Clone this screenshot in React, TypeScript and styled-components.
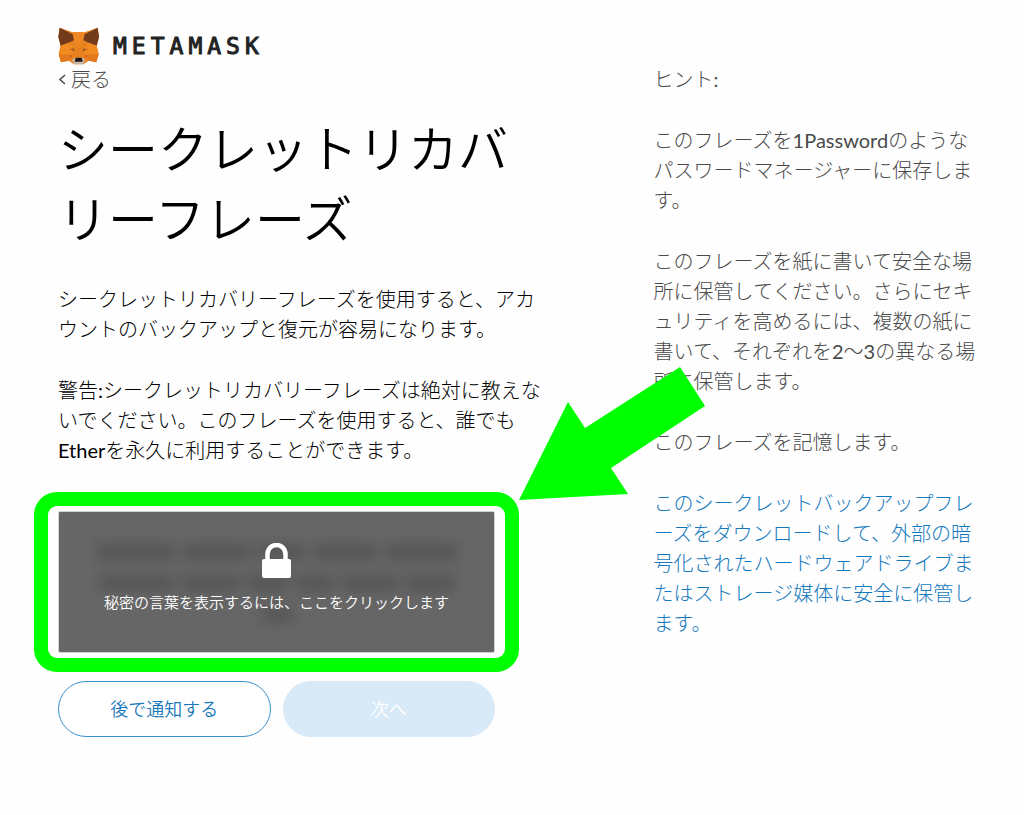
import React from "react";
import styled, { createGlobalStyle } from "styled-components";

const GlobalStyle = createGlobalStyle`
  * { box-sizing: border-box; }
  body {
    margin: 0;
    background: #fefefe;
    color: #000;
    font-family: Lato, "Noto Sans CJK JP Light", "Noto Sans CJK JP", sans-serif;
    font-size: 20px;
    line-height: 30px;
    font-weight: 400;
    line-break: loose;
  }
`;

const Page = styled.div`
  padding: 28px 44px 78px 58px;
`;

const Header = styled.header`
  display: flex;
  align-items: center;
  gap: 13px;
  height: 36px;
`;

const FoxLogo = styled.svg`
  width: 42px;
  height: 38px;
`;

const Wordmark = styled.span`
  font-family: "DejaVu Sans Mono", monospace;
  font-size: 23px;
  letter-spacing: 5px;
  color: #222;
  -webkit-text-stroke: 1px #222;
`;

const Columns = styled.div`
  display: grid;
  grid-template-columns: 3fr 2fr;
  gap: 106px;
`;

const Main = styled.main`
  min-width: 0;
`;

const BackLink = styled.a`
  display: flex;
  align-items: center;
  gap: 4px;
  width: fit-content;
  height: 30px;
  color: #4a4a4a;
  text-decoration: none;
`;

const Chevron = styled.svg`
  width: 9px;
  height: 12px;
`;

const Title = styled.h1`
  margin: 20px 0 30px;
  color: #000;
  font-family: Lato, "Noto Sans CJK JP DemiLight", "Noto Sans CJK JP", sans-serif;
  font-size: 50px;
  line-height: 70px;
  font-weight: 350;
`;

const Paragraph = styled.p`
  margin: 0 0 31px;
`;

const SecretArea = styled.div`
  position: relative;
  max-width: 437px;
  margin-top: 46px;
`;

const SecretBox = styled.div`
  display: grid;
  height: 142px;
  overflow: hidden;
  border: 1px solid #d2d2d2;
  border-radius: 2px;
  background: #fff;

  > * { grid-area: 1 / 1; }
`;

const HiddenWords = styled.div`
  display: flex;
  flex-direction: column;
  align-items: center;
  padding-top: 32px;
  gap: 15px;
  filter: blur(7px);
`;

const WordLine = styled.div`
  display: flex;
  gap: 8px;
`;

const Word = styled.span<{ $width: number }>`
  width: ${(p) => p.$width}px;
  height: 16px;
  background: #d4d4d4;
`;

const RevealButton = styled.button`
  position: relative;
  display: flex;
  flex-direction: column;
  align-items: center;
  gap: 9px;
  padding: 31px 0 0;
  border: 0;
  background: rgba(0, 0, 0, 0.6);
  color: #fff;
  font: inherit;
  font-family: "Noto Sans CJK JP DemiLight", "Noto Sans CJK JP", sans-serif;
  font-size: 15px;
  font-weight: 350;
  cursor: pointer;
`;

const LockIcon = styled.svg`
  width: 29px;
  height: 35px;
`;

const Highlight = styled.div`
  position: absolute;
  inset: -19px -24px;
  border: 14px solid #00ff00;
  border-radius: 23px;
  pointer-events: none;
`;

const Arrow = styled.svg`
  position: absolute;
  z-index: 1;
  left: 461px;
  bottom: 153px;
  width: 186px;
  height: 133px;
  pointer-events: none;
`;

const Actions = styled.div`
  display: flex;
  gap: 12px;
  max-width: 437px;
  margin-top: 28px;
`;

const PillButton = styled.button<{ $primary?: boolean }>`
  flex: 1;
  height: 56px;
  padding: 0 0 2px;
  border: 1px solid ${(p) => (p.$primary ? "#d8e9f8" : "#3a91cc")};
  border-radius: 28px;
  background: ${(p) => (p.$primary ? "#d8e9f8" : "#fff")};
  color: ${(p) => (p.$primary ? "#fff" : "#1878bb")};
  font: inherit;
  font-family: "Noto Sans CJK JP DemiLight", "Noto Sans CJK JP", sans-serif;
  font-size: 18px;
  font-weight: 350;
`;

const Tips = styled.aside`
  min-width: 0;
  color: #4a4a4a;
`;

const DownloadLink = styled.a`
  color: #1478bd;
  text-decoration: none;
`;

function Fox() {
  return (
    <FoxLogo viewBox="0 0 126 114" aria-hidden="true">
      <path d="M5 2 44 16H80L119 2 123 30 116 58 122 82 115 106 92 101 76 112H48L32 101 9 106 2 82 8 58 1 30Z" fill="#e8821e" />
      <path d="M44 16H80L76 44 62 62 48 44Z" fill="#ee8722" />
      <path d="M5 2 44 22 48 40 30 48 8 56 1 30Z" fill="#713b1c" />
      <path d="M119 2 80 22 76 40 94 48 116 56 123 30Z" fill="#713b1c" />
      <path d="M8 56 32 47 48 66 42 84 2 82Z" fill="#f18a20" />
      <path d="M116 56 92 47 76 66 82 84 122 82Z" fill="#f18a20" />
      <path d="M2 82 42 84 32 101 9 106Z" fill="#e27a1d" />
      <path d="M122 82 82 84 92 101 115 106Z" fill="#e27a1d" />
      <path d="M34 67 47 63 51 73Z" fill="#c4651f" />
      <path d="M90 67 77 63 73 73Z" fill="#c4651f" />
      <path d="M42 69 47 67 48 72Z" fill="#5c3f33" />
      <path d="M82 69 77 67 76 72Z" fill="#5c3f33" />
      <path d="M33 86 43 83 42 92Z" fill="#cf6220" />
      <path d="M91 86 81 83 82 92Z" fill="#cf6220" />
      <path d="M42 98 53 92H71L82 98 75 112H49Z" fill="#c8b8a9" />
      <path d="M53 92H71L74 104H50Z" fill="#1d1714" />
    </FoxLogo>
  );
}

const hiddenLines = [
  [78, 68, 46, 64, 72],
  [74, 58, 42, 36, 56, 50],
  [30],
];

export default function App() {
  return (
    <>
      <GlobalStyle />
      <Page lang="ja">
        <Header>
          <Fox />
          <Wordmark>METAMASK</Wordmark>
        </Header>
        <Columns>
          <Main>
            <BackLink href="#back">
              <Chevron viewBox="0 0 9 12" aria-hidden="true">
                <path d="M7 2 2 6.500 7 11" fill="none" stroke="currentColor" strokeWidth="1.500" />
              </Chevron>
              戻る
            </BackLink>
            <Title>シークレットリカバリーフレーズ</Title>
            <Paragraph>
              シークレットリカバリーフレーズを使用すると、アカウントのバックアップと復元が容易になります。
            </Paragraph>
            <Paragraph>
              警告:シークレットリカバリーフレーズは絶対に教えないでください。このフレーズを使用すると、誰でもEtherを永久に利用することができます。
            </Paragraph>
            <SecretArea>
              <SecretBox>
                <HiddenWords aria-hidden="true">
                  {hiddenLines.map((line, i) => (
                    <WordLine key={i}>
                      {line.map((width, j) => (
                        <Word key={j} $width={width} />
                      ))}
                    </WordLine>
                  ))}
                </HiddenWords>
                <RevealButton type="button">
                  <LockIcon viewBox="0 0 29 35" aria-hidden="true">
                    <path d="M5.500 18V11a9 9 0 0 1 18 0V18" fill="none" stroke="#fff" strokeWidth="4.500" />
                    <rect y="16" width="29" height="19" rx="2" fill="#fff" />
                  </LockIcon>
                  秘密の言葉を表示するには、ここをクリックします
                </RevealButton>
              </SecretBox>
              <Highlight />
              <Arrow viewBox="0 0 186 133" aria-hidden="true">
                <path d="M0 133 49 35 66 61 161 0 186 39 92 101 109 127Z" fill="#00ff00" />
              </Arrow>
            </SecretArea>
            <Actions>
              <PillButton type="button">後で通知する</PillButton>
              <PillButton type="button" $primary disabled>
                次へ
              </PillButton>
            </Actions>
          </Main>
          <Tips>
            <Paragraph>ヒント:</Paragraph>
            <Paragraph>
              このフレーズを1Passwordのようなパスワードマネージャーに保存します。
            </Paragraph>
            <Paragraph>
              このフレーズを紙に書いて安全な場所に保管してください。さらにセキュリティを高めるには、複数の紙に書いて、それぞれを2〜3の異なる場所に保管します。
            </Paragraph>
            <Paragraph>このフレーズを記憶します。</Paragraph>
            <Paragraph>
              <DownloadLink href="#download">
                このシークレットバックアップフレーズをダウンロードして、外部の暗号化されたハードウェアドライブまたはストレージ媒体に安全に保管します。
              </DownloadLink>
            </Paragraph>
          </Tips>
        </Columns>
      </Page>
    </>
  );
}
